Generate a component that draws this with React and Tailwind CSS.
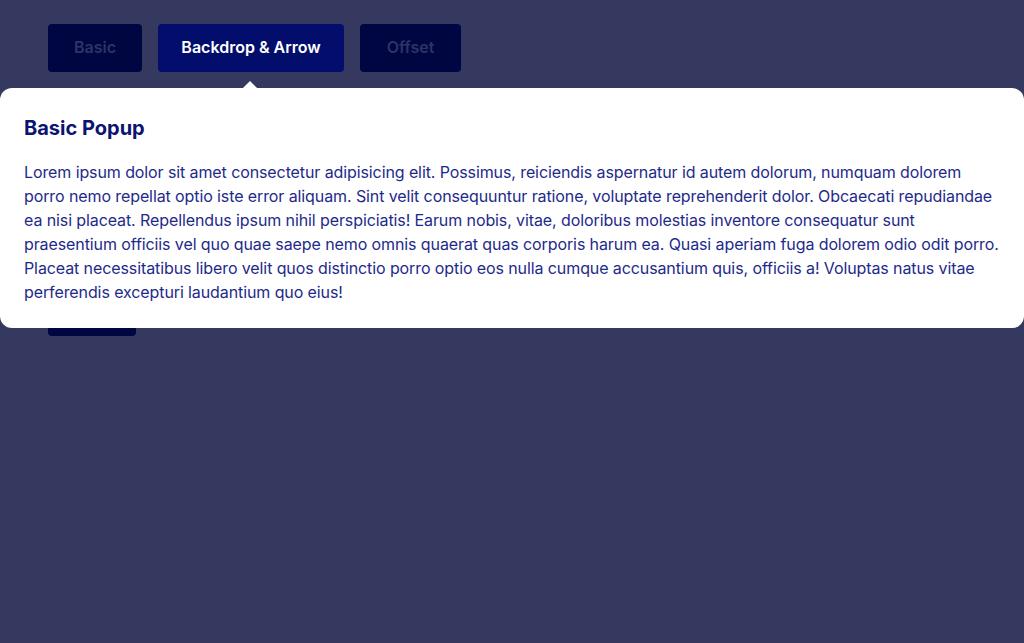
export default function App() {
  const font = { fontFamily: "Inter, 'Noto Sans', sans-serif" };
  return (
    <div className="relative min-h-[643px] w-[1024px] bg-[#35385f] overflow-hidden" style={font}>
      <div className="flex flex-col gap-6 px-12 pt-6">
        <div className="flex gap-4">
          <button className="h-12 w-[94px] rounded bg-[#000642] pb-0.5 text-base font-semibold text-[#2e3367]">Basic</button>
          <button className="relative h-12 w-[186px] rounded bg-[#030d6c] pb-0.5 text-base font-semibold text-white">
            Backdrop &amp; Arrow
          </button>
          <button className="h-12 w-[101px] rounded bg-[#000642] pb-0.5 text-base font-semibold text-[#2e3367]">Offset</button>
        </div>
        <div className="mt-[192px]">
          <button className="h-12 w-[88px] rounded bg-[#000642] text-base font-semibold text-[#2e3367]">More</button>
        </div>
      </div>
      <div className="absolute left-0 right-0 top-[88px] rounded-xl bg-white p-6">
        <div className="absolute left-[245px] top-[-5px] h-[10px] w-[10px] rotate-45 bg-white"></div>
        <h2 className="mb-4 text-xl font-bold leading-8 text-[#0b1470]">Basic Popup</h2>
        <p className="text-base leading-6 tracking-[-0.1px] text-[#1e2a8a]">
          Lorem ipsum dolor sit amet consectetur adipisicing elit. Possimus, reiciendis aspernatur id autem dolorum, numquam dolorem porro nemo repellat optio iste error aliquam. Sint velit consequuntur ratione, voluptate reprehenderit dolor. Obcaecati repudiandae ea nisi placeat. Repellendus ipsum nihil perspiciatis! Earum nobis, vitae, doloribus molestias inventore consequatur sunt praesentium officiis vel quo quae saepe nemo omnis quaerat quas corporis harum ea. Quasi aperiam fuga dolorem odio odit porro. Placeat necessitatibus libero velit quos distinctio porro optio eos nulla cumque accusantium quis, officiis a! Voluptas natus vitae perferendis excepturi laudantium quo eius!
        </p>
      </div>
    </div>
  );
}
